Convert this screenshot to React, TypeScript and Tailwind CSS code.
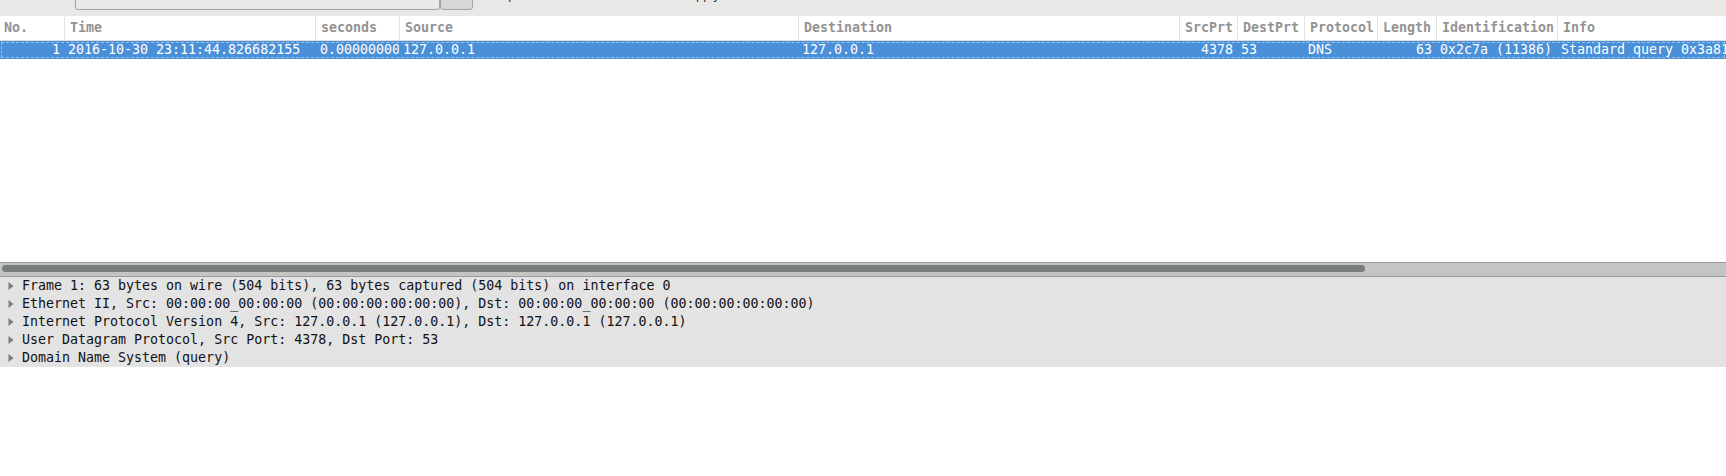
import React from "react";

const mono = { fontFamily: '"DejaVu Sans Mono", "Liberation Mono", monospace' };

type Col = { title: string; w: string; right?: boolean; pad?: string; value: string };

const cols: Col[] = [
  { title: "No.", w: "w-[64px]", right: true, value: "1" },
  { title: "Time", w: "w-[251px]", value: "2016-10-30 23:11:44.826682155" },
  { title: "seconds", w: "w-[84px]", pad: "pl-[5px]", value: "0.000000000" },
  { title: "Source", w: "w-[399px]", value: "127.0.0.1" },
  { title: "Destination", w: "w-[381px]", value: "127.0.0.1" },
  { title: "SrcPrt", w: "w-[58px]", right: true, value: "4378" },
  { title: "DestPrt", w: "w-[67px]", value: "53" },
  { title: "Protocol", w: "w-[73px]", value: "DNS" },
  { title: "Length", w: "w-[59px]", right: true, value: "63" },
  { title: "Identification", w: "w-[121px]", value: "0x2c7a (11386)" },
  { title: "Info", w: "w-[240px]", value: "Standard query 0x3a81 A localhost" },
];

const details = [
  "Frame 1: 63 bytes on wire (504 bits), 63 bytes captured (504 bits) on interface 0",
  "Ethernet II, Src: 00:00:00_00:00:00 (00:00:00:00:00:00), Dst: 00:00:00_00:00:00 (00:00:00:00:00:00)",
  "Internet Protocol Version 4, Src: 127.0.0.1 (127.0.0.1), Dst: 127.0.0.1 (127.0.0.1)",
  "User Datagram Protocol, Src Port: 4378, Dst Port: 53",
  "Domain Name System (query)",
];

function Expander() {
  return (
    <svg width="6" height="10" viewBox="0 0 6 10" className="shrink-0">
      <polygon points="0.5,1 5.5,5 0.5,9" fill="#7d7d7d" />
    </svg>
  );
}

export default function App() {
  return (
    <div className="w-full h-[476px] overflow-hidden bg-white flex flex-col">
      {/* filter toolbar, cut at the top */}
      <div className="h-[16px] shrink-0 overflow-hidden bg-[#e8e8e7]">
        <div className="flex items-start -mt-[16px] whitespace-nowrap text-[13px] text-[#2e3436]" style={{ fontFamily: '"Liberation Sans", Arial, sans-serif' }}>
          <div className="ml-[75px] w-[365px] h-[26px] border border-[#a3a3a1] rounded-b-[3px] bg-[#e9e9e7]" />
          <div className="w-[33px] h-[26px] border border-[#a3a3a1] rounded-b-[3px] bg-[#d7d7d5]" />
          <span className="ml-[20px] mt-[2.5px] leading-[16px]">Expression...</span>
          <span className="ml-[24px] mt-[2.5px] leading-[16px]">Clear</span>
          <span className="ml-[64px] mt-[2.5px] leading-[16px]">Apply</span>
          <span className="ml-[24px] mt-[2.5px] leading-[16px]">Save</span>
        </div>
      </div>

      {/* packet list */}
      <div className="h-[246px] shrink-0 flex flex-col overflow-hidden" style={mono}>
        <div className="h-[25px] shrink-0 flex border-b border-[#dedede] text-[13.3px] font-bold text-[#939393]">
          {cols.map((c, i) => (
            <div
              key={c.title}
              className={`${c.w} shrink-0 h-full flex items-center overflow-hidden whitespace-nowrap ${i === 0 ? "pl-[4px]" : "border-l border-[#e3e3e3] pl-[5px]"}`}
            >
              {c.title}
            </div>
          ))}
        </div>
        <div className="h-[18px] shrink-0 flex bg-[#4a90d9] text-white text-[13.3px] outline-1 outline-dashed outline-[#9cc0ea] -outline-offset-2">
          {cols.map((c) => (
            <div
              key={c.title}
              className={`${c.w} shrink-0 h-full flex items-center overflow-hidden whitespace-nowrap ${c.right ? "justify-end pr-[4px]" : c.pad ?? "pl-[4px]"}`}
            >
              {c.value}
            </div>
          ))}
        </div>
        <div className="flex-1 bg-white" />
      </div>

      {/* horizontal scrollbar */}
      <div className="h-[15px] shrink-0 border-t border-b border-[#9a9a9a] bg-[#c3c4c4] px-[2px] pt-[2px]">
        <div className="w-[1363px] h-[7px] rounded-full bg-[#797c7c]" />
      </div>

      {/* packet details */}
      <div className="shrink-0 bg-[#e3e3e3] text-[13.3px] text-[#111]" style={mono}>
        {details.map((d) => (
          <div key={d} className="h-[18px] flex items-center whitespace-nowrap">
            <div className="w-[22px] shrink-0 flex justify-start pl-[8px]">
              <Expander />
            </div>
            <span>{d}</span>
          </div>
        ))}
      </div>
      <div className="flex-1 bg-white" />
    </div>
  );
}
